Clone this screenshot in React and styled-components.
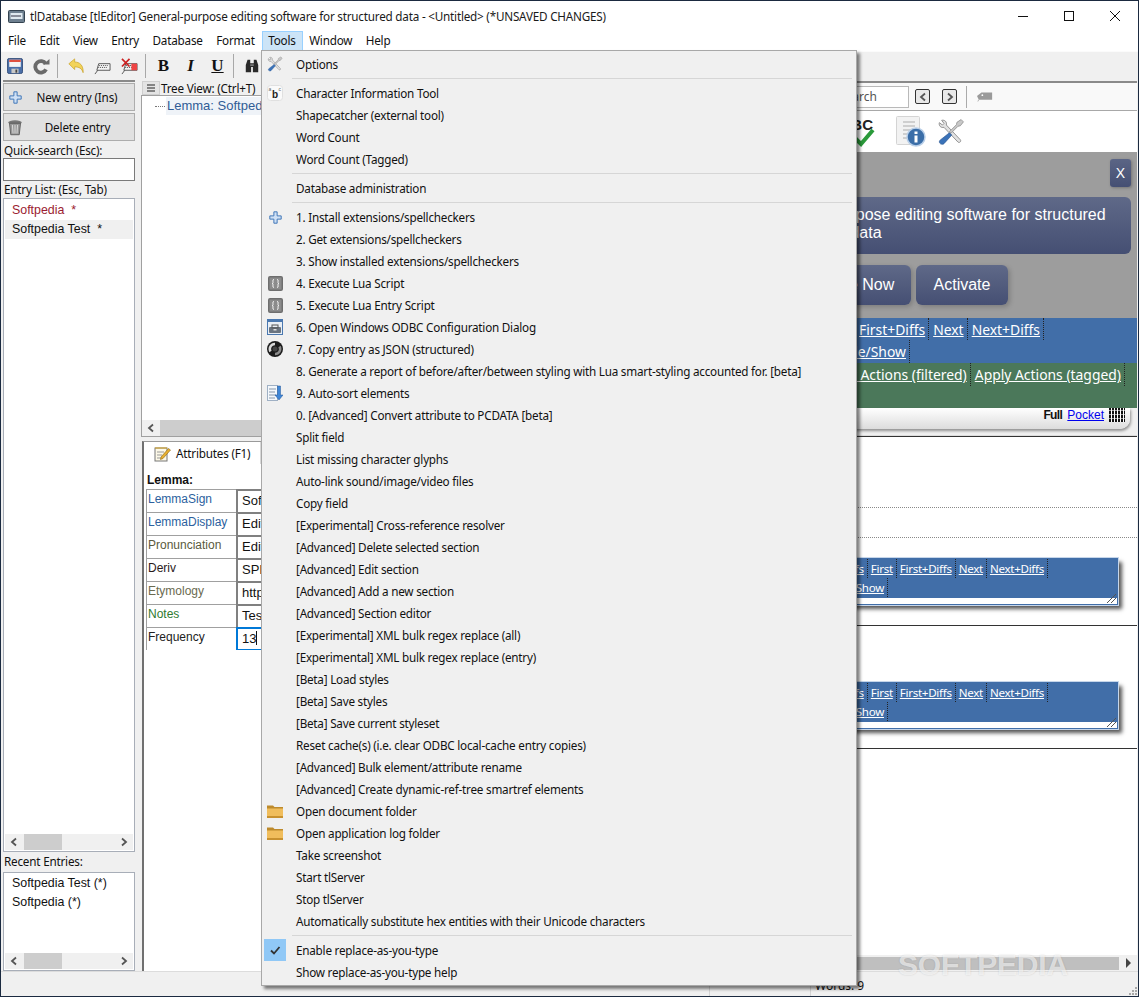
import React from 'react';
import styled, { createGlobalStyle } from 'styled-components';

const UI = '"Noto Sans", "Open Sans", sans-serif';
const ARIAL = '"Liberation Sans", Arial, sans-serif';

const Global = createGlobalStyle`
  html, body { margin: 0; padding: 0; background: #f0f0f0; }
  #root { width: 1139px; height: 997px; overflow: hidden; }
  * { box-sizing: border-box; }
`;

const Win = styled.div`
  position: relative; width: 1139px; height: 997px; display: flex; flex-direction: column;
  border: 1px solid #1b2a40; background: #f0f0f0; font: 12px ${UI}; color: #111; overflow: hidden;
`;
const TitleBar = styled.div`
  height: 30px; background: #fff; display: flex; align-items: center; padding-left: 7px; flex: none;
`;
const TitleText = styled.div`
  margin-left: 5px; flex: 1; white-space: nowrap; font-size: 11.7px; letter-spacing: -.21px; color: #1a1a1a;
`;
const WinCtl = styled.div`
  width: 46px; height: 30px; display: flex; align-items: center; justify-content: center;
`;
const MenuBar = styled.div`
  height: 20px; background: #fff; display: flex; flex: none;
`;
const MenuTop = styled.div`
  padding: 0 7px 0 ${p => (p.$first ? 7 : 6.500)}px; height: 20px; line-height: 19px; font-size: 11.7px; letter-spacing: -.2px; white-space: nowrap;
  background: ${p => (p.$open ? '#cce4f7' : 'transparent')};
  box-shadow: ${p => (p.$open ? 'inset 0 0 0 1px #99d1ff' : 'none')};
`;
const Toolbar = styled.div`
  height: 30px; flex: none; display: flex; align-items: center; background: #f0f0f0; padding-bottom: 1px;
  border-top: 1px solid #fbfbfb;
`;
const ToolBtn = styled.div`
  width: 27px; height: 24px; display: flex; align-items: center; justify-content: center; flex: none;
`;
const TBLetter = styled.span`
  font: bold 17px "Liberation Serif", serif; color: #111;
  font-style: ${p => (p.$i ? 'italic' : 'normal')};
  text-decoration: ${p => (p.$u ? 'underline' : 'none')};
`;
const TBSep = styled.div`
  width: 1px; height: 24px; background: #a8a8a8; margin: 0 4px 0 2px; flex: none;
`;
const Main = styled.div`
  flex: 1; min-height: 0; display: flex; padding: 0 1px 0 2px;
`;
const LeftCol = styled.div`
  width: 132px; flex: none; display: flex; flex-direction: column; padding-top: 1px;
  border-top: 2px solid #8a8a8a; margin-top: -1px;
`;
const SideBtn = styled.div`
  height: 28px; margin-bottom: 2px; background: #e1e1e1; border: 1px solid #adadad; display: flex; align-items: center;
  font: 11.7px ${UI}; letter-spacing: -.15px; padding-left: ${p => p.$pl}px;
`;
const SideLabel = styled.span`
  flex: 1; text-align: center; padding-right: 2px; color: #111;
`;
const Lbl = styled.div`
  height: ${p => p.$h}px; padding: 0 0 ${p => p.$pb || 0}px 1px; font: 11.7px ${UI}; letter-spacing: -.2px; display: flex; align-items: center; color: #111; flex: none;
`;
const SearchBox = styled.div`
  height: 23px; background: #fff; border: 1px solid #7a7a7a; flex: none;
`;
const ListBox = styled.div`
  flex: ${p => (p.$h ? 'none' : 1)}; height: ${p => (p.$h ? p.$h + 'px' : 'auto')}; min-height: 0; background: #fff; border: 1px solid #a8aeb8;
  display: flex; flex-direction: column; padding: ${p => (p.$h ? 1 : 2)}px 1px 1px;
`;
const ListItem = styled.div`
  height: 19px; font: 12.4px/19px ${ARIAL}; padding-left: 7px; white-space: pre; flex: none;
  color: ${p => p.$c || '#111'}; background: ${p => (p.$sel ? '#f0f0f0' : 'transparent')};
`;
const Spacer = styled.div`flex: 1;`;
const HScroll = styled.div`
  height: 16px; flex: none; background: #f0f0f0; display: flex; align-items: center;
`;
const Arrow = styled.div`
  width: ${p => p.$w || 16}px; flex: none; display: flex; align-items: center; justify-content: center;
`;
const Track = styled.div`
  flex: 1; height: 100%; display: flex;
`;
const Thumb = styled.div`
  height: 100%; width: ${p => p.$w}px; margin-left: ${p => p.$l || 0}px; background: #cdcdcd;
`;
const Splitter = styled.div`
  width: 6px; flex: none; background: #f0f0f0;
`;
const CenterCol = styled.div`
  width: 449px; flex: none; display: flex; flex-direction: column;
`;
const TreeHead = styled.div`
  height: 14px; display: flex; align-items: center; font: 11.7px ${UI}; letter-spacing: -.2px; flex: none; padding-left: 1px;
`;
const TreeBtn = styled.div`
  width: 18px; height: 14px; background: #e4e4e4; border: 1px solid #cfcfcf; margin-right: 1px; display: flex; align-items: center; justify-content: center;
`;
const TreeBox = styled.div`
  height: 342px; flex: none; background: #fff; border: 1px solid #a0a0a0; display: flex; flex-direction: column;
`;
const TreeRow = styled.div`
  display: flex; align-items: center; margin-top: 1px; padding-left: 13px; height: 18px; font: 13px ${ARIAL}; flex: none;
`;
const TreeDots = styled.span`
  width: 10px; border-top: 1px dotted #777; margin-right: 1px;
`;
const TreeSel = styled.span`
  background: #eff3f8; color: #2f5c96; padding: 0 1px; height: 18px; line-height: 18px; flex: 1; white-space: nowrap;
`;
const TabPane = styled.div`
  flex: 1; min-height: 0; margin: 4px 0 0 1px; border-left: 2px solid #707070; border-top: 1px solid #9a9a9a; background: #fff;
  display: flex; flex-direction: column;
`;
const TabStrip = styled.div`
  height: 22px; display: flex; padding-left: 1px; flex: none;
`;
const Tab = styled.div`
  height: 22px; display: flex; align-items: center; gap: 5px; padding: 0 5px 0 8px; font: 11.7px ${UI}; letter-spacing: -.2px;
  background: ${p => (p.$on ? '#fff' : '#f0f0f0')}; margin-right: 2px;
  border: 1px solid ${p => (p.$on ? '#fff' : '#d9d9d9')}; white-space: nowrap; width: ${p => p.$w}px;
`;
const LemmaHead = styled.div`
  font: bold 12px ${ARIAL}; padding: 9px 0 2px 2px; height: 25px; margin-left: 1px; color: #111;
`;
const AttrGrid = styled.div`
  display: grid; grid-template-columns: 90px 1fr; grid-auto-rows: 23px; margin-left: 2px;
`;
const AttrName = styled.div`
  border-top: 1px solid #a0a0a0; border-left: 1px solid #a0a0a0; font: 12px/16px ${ARIAL}; color: ${p => p.$c};
  padding: 1px 0 0 1px;
  height: 23px;
`;
const AttrValue = styled.div`
  border-top: 2px solid ${p => (p.$on ? '#0078d7' : '#808080')};
  border-left: 2px solid ${p => (p.$on ? '#0078d7' : '#808080')};
  border-bottom: ${p => (p.$on ? '1px solid #0078d7' : '0')};
  border-right: ${p => (p.$on ? '1px solid #0078d7' : '0')};
  font: 13px/20px ${ARIAL}; padding-left: 4px; color: #111;
`;
const Caret = styled.span`
  display: inline-block; width: 1px; height: 14px; background: #111; vertical-align: -2px;
`;
const RightCol = styled.div`
  flex: 1; min-width: 0; display: flex; flex-direction: column; border-top: 2px solid #8a8a8a;
`;
const RTool = styled.div`
  height: 28px; flex: none; background: #f9f9f9; border-bottom: 1px solid #a8a8a8; display: flex; align-items: center; justify-content: flex-end; padding-right: 144px;
`;
const RInput = styled.div`
  width: 76px; height: 22px; background: #fff; border: 1px solid #b9b9b9; font: 12px/20px ${UI}; padding-left: 5px; color: #555; margin-right: 6px;
`;
const NavBtn = styled.div`
  width: 15px; height: 15px; border: 1px solid #333; border-radius: 2px; background: #e8e8e8; margin-right: ${p => p.$mr}px; display: flex; align-items: center; justify-content: center;
`;
const RSep = styled.div`
  width: 1px; height: 22px; background: #aaa; margin-right: 10px;
`;
const RIcons = styled.div`
  height: 41px; flex: none; background: #fff; display: flex; align-items: center; justify-content: flex-end; padding-right: 172px; gap: 11px;
`;
const AbcWrap = styled.div`
  position: relative; width: 46px; height: 34px; font: bold 15px/20px ${ARIAL}; color: #222; margin-right: 10px; text-align: right; padding-right: 2px;
`;
const AbcCheck = styled.svg`
  position: absolute; right: 0; top: 12px;
`;
const GreyBand = styled.div`
  height: 166px; flex: none; background: #9d9d9d; display: flex; flex-direction: column; align-items: center; padding: 7px 6px 0 11px;
`;
const Close = styled.div`
  width: 21px; height: 28px; align-self: flex-end; border-radius: 3px; background: linear-gradient(#5b6585, #454f73);
  color: #fff; font: 14px/28px ${ARIAL}; text-align: center; box-shadow: 1px 1px 3px rgba(0,0,0,.25);
`;
const Headline = styled.div`
  width: 100%; height: 57px; margin-top: 10px; border-radius: 6px; background: linear-gradient(#5f6988, #454f73);
  color: #fff; font: 16px/18px ${ARIAL}; text-align: center; padding: 9px 24px;
`;
const BtnRow = styled.div`
  display: flex; gap: 5px; margin-top: 11px; justify-content: center;
`;
const BigBtn = styled.div`
  height: 40px; width: ${p => p.$w}px; padding-right: ${p => p.$pr || 0}px; border-radius: 6px; background: linear-gradient(#5f6988, #454f73); color: #fff;
  font: 16px/40px ${ARIAL}; text-align: center; white-space: nowrap; box-shadow: 2px 2px 5px rgba(0,0,0,.2);
`;
const Band = styled.div`
  height: 45px; flex: none; background: ${p => p.$c};
`;
const LinkRow = styled.div`
  height: ${p => p.$h || 23}px; display: flex; align-items: stretch; justify-content: flex-end; padding-right: ${p => p.$pr}px;
`;
const BandLink = styled.a`
  color: #fff; text-decoration: underline; font: 13.9px/23px ${UI}; white-space: nowrap; padding: 0 3px 0 4px;
  border-right: 1px dotted #222;
`;
const SmallLink = styled.a`
  color: #fff; text-decoration: underline; font: 11.6px ${UI}; letter-spacing: -.3px; white-space: nowrap; padding: 0 3px;
  border-right: 1px dotted #222; height: 19px; line-height: 19px;
`;
const Strip = styled.div`
  height: 21px; flex: none; margin-right: 7px; border-bottom-right-radius: 10px; background: linear-gradient(#fff, #dcdcdc);
  box-shadow: 1px 2px 3px rgba(0,0,0,.4); display: flex; align-items: flex-start; justify-content: flex-end; font: 12px ${ARIAL}; padding: 0 5px 0 0; gap: 5px;
`;
const FullTxt = styled.b`font-weight: bold; color: #111; letter-spacing: -.6px;`;
const Pocket = styled.a`color: #0000ee; text-decoration: underline;`;
const Body = styled.div`
  flex: 1; min-height: 0; background: #fff; display: flex; flex-direction: column; border-top: 1px solid #dcdcdc; margin-top: 6px;
`;
const Rule = styled.div`
  flex: none; margin-top: ${p => p.$mt || 0}px; border-top: ${p => (p.$dot ? '1px dotted #8a8a8a' : '1px solid #333')};
`;
const FloatBox = styled.div`
  flex: none; width: 420px; height: 47px; margin: ${p => p.$mt}px 19px 0 auto; background: #fff; border: 1px solid #416ea8; outline: 1px solid #c6d6ea;
  box-shadow: 4px 4px 4px #555; position: relative;
`;
const FloatInner = styled.div`
  height: 39px; background: #416ea8;
`;
const FloatRow = styled.div`
  height: 19px; display: flex; justify-content: flex-end; padding-right: ${p => p.$pr}px;
`;
const Grip = styled.svg`
  position: absolute; right: 1px; bottom: 1px;
`;
const BottomScroll = styled.div`
  height: 16px; flex: none; display: flex; background: #f0f0f0; margin-top: auto;
`;
const BarFill = styled.div`
  flex: 1; background: #bfbfbf; margin: 2px 0 1px;
`;
const Status = styled.div`
  height: 25px; flex: none; background: #f0f0f0; border-top: 1px solid #dcdcdc; display: flex; font: 12px ${UI};
`;
const StatusCell = styled.div`
  width: ${p => p.$w}px; flex: none; border-right: 1px solid #d4d4d4;
`;
const StatusLast = styled.div`
  flex: 1; display: flex; justify-content: space-between; padding: 5px 1px 1px 4px; white-space: nowrap;
`;
const StatusGrip = styled.svg`
  align-self: flex-end;
`;
const Watermark = styled.div`
  position: absolute; left: 897px; top: 948px; font: bold 30px/32px ${ARIAL}; color: rgba(255,255,255,.62); letter-spacing: -.2px;
  text-shadow: 0 0 2px rgba(0,0,0,.14); pointer-events: none;
`;
const Menu = styled.div`
  position: absolute; left: 260px; top: 49px; width: 596px; height: 936px; background: #f0f0f0; border: 1px solid #a8a8a8; padding: 2px 2px 1px;
  box-shadow: 3px 3px 3px rgba(0,0,0,.5); z-index: 5;
`;
const MI = styled.div`
  height: 22px; display: flex; align-items: center; white-space: nowrap; font-size: 11.7px; letter-spacing: -.22px; color: #111;
`;
const MIcon = styled.div`
  width: 22px; height: 22px; margin-right: 10px; display: flex; align-items: center; justify-content: center; flex: none;
  background: ${p => (p.$on ? '#90c8f6' : 'transparent')};
`;
const MSep = styled.div`
  height: 7px; display: flex; align-items: center; padding: 0 2px 0 28px;
  &::after { content: ''; flex: 1; border-top: 1px solid #d6d6d6; }
`;

const Save = () => (
  <svg width="16" height="16" viewBox="0 0 18 18"><rect x=".5" y=".5" width="17" height="17" rx="2" fill="#4a6fa8" stroke="#2f4a78"/><rect x="2.500" y="2" width="13" height="8" fill="#f4f4f4"/><rect x="2.500" y="2" width="13" height="2.500" fill="#e0503f"/><rect x="5" y="12" width="8" height="5" fill="#c9c9c9"/><rect x="9.500" y="13" width="2" height="3.500" fill="#444"/></svg>
);
const Refresh = () => (
  <svg width="17" height="17" viewBox="0 0 18 18"><path d="M13.500 6.200A6 6 0 1 0 13.800 12" fill="none" stroke="#6a6a6a" strokeWidth="4"/><path d="M10.500 7h7V1z" fill="#6a6a6a"/></svg>
);
const Undo = () => (
  <svg width="16" height="16" viewBox="0 0 18 18"><path d="M1 6.500 7.500 1v3.500c5.500 0 10 3.500 9.500 12-1.500-5-4.500-6.500-9.500-6.500V13z" fill="#f2d35a" stroke="#c9a227" strokeWidth=".8"/></svg>
);
const Keyboard = ({ x }) => (
  <svg width="17" height="17" viewBox="0 0 18 18"><path d="M5 6h12v7H3z" fill="#f5f5f5" stroke="#555"/><path d="M5.500 8h10M4.500 10h10" stroke="#444" strokeDasharray="1 1"/><path d="M1 17l3-4" stroke="#555"/>{x && <><rect x="11" y="6" width="6" height="7" fill="#e44"/><path d="M1 1l8 8M9 1 1 9" stroke="#c22" strokeWidth="1.800"/></>}</svg>
);
const Binoc = () => (
  <svg width="16" height="16" viewBox="0 0 18 18"><path d="M2 8 4 2h3v4h4V2h3l2 6v8h-6v-6H8v6H2z" fill="#2a2a2a"/><rect x="7" y="7" width="4" height="2" fill="#777"/></svg>
);
const Plus = ({ s = 13 }) => (
  <svg width={s} height={s} viewBox="0 0 16 16"><path d="M6 1h4v5h5v4h-5v5H6v-5H1V6h5z" fill="#cfe0f5" stroke="#3f76b8" strokeWidth="1.200"/></svg>
);
const Trash = () => (
  <svg width="16" height="17" viewBox="0 0 18 20"><ellipse cx="9" cy="4" rx="8" ry="2.500" fill="#777"/><path d="M2.500 5h13l-1.500 13.500H4z" fill="#999" stroke="#555"/><path d="M6 7l.7 10M9 7v10M12 7l-.7 10" stroke="#e4e4e4"/></svg>
);
const Tools = ({ s = 16 }) => (
  <svg width={s} height={s} viewBox="0 0 18 18"><path d="M3 1.500c2-.5 3.500 1 3 3l9 9.500c.8 1-.5 2.200-1.500 1.500L4.500 6C2.500 6.500 1 5 1.500 3l2 1.500 1-1z" fill="#e2e2e2" stroke="#8c8c8c" strokeWidth=".6"/><path d="M15.500 1l1.500 1.500-2 2.500-1.500.3-4.500 4.500-1-1 4.500-4.500.3-1.500z" fill="#c8c8c8" stroke="#8c8c8c" strokeWidth=".5"/><path d="M8 9.500 9.500 11l-5 5.500c-1 1-3 .2-3-1.200 0-.6.3-1 .8-1.300z" fill="#3a72b8" stroke="#2a5590" strokeWidth=".4"/></svg>
);
const CharB = () => (
  <svg width="16" height="16" viewBox="0 0 16 16"><rect x=".5" y=".5" width="15" height="15" rx="3" fill="#fafafa" stroke="#e0e0e0"/><text x="5" y="12.500" fontFamily="Liberation Sans" fontWeight="bold" fontSize="10" fill="#222">b</text><text x="1.500" y="6" fontFamily="Liberation Sans" fontSize="5" fill="#666">a</text><text x="11.500" y="6" fontFamily="Liberation Sans" fontSize="5" fill="#666">c</text></svg>
);
const Lua = () => (
  <svg width="15" height="15" viewBox="0 0 15 15"><rect width="15" height="15" rx="2" fill="#6e6e6e"/><rect x="1.500" y="1.500" width="12" height="12" fill="#8b8b8b"/><path d="M6 3.500c-1.500 0-1 1.500-1 3s-1 1-1 1 1 0 1 1-.5 3 1 3M9 3.500c1.500 0 1 1.500 1 3s1 1 1 1-1 0-1 1 .5 3-1 3" fill="none" stroke="#fff"/></svg>
);
const Odbc = () => (
  <svg width="16" height="16" viewBox="0 0 16 16"><rect width="16" height="16" fill="#4a78b0"/><rect x="1" y="3" width="14" height="12" fill="#e8eef5"/><rect x="2" y="8" width="12" height="6" rx="1" fill="#6a7480"/><rect x="5" y="6" width="6" height="3" fill="none" stroke="#555"/><rect x="6.500" y="10" width="3" height="1.500" fill="#ddd"/></svg>
);
const Swirl = () => (
  <svg width="16" height="16" viewBox="0 0 16 16"><circle cx="8" cy="8" r="8" fill="#1c1c1c"/><path d="M8 3a5 5 0 0 0-4.500 7.500" fill="none" stroke="#d8d8d8" strokeWidth="2.500"/><path d="M8 13a5 5 0 0 0 4.500-7.500" fill="none" stroke="#8c8c8c" strokeWidth="2.500"/><circle cx="8" cy="8" r="2.500" fill="#444"/></svg>
);
const Sort = () => (
  <svg width="16" height="16" viewBox="0 0 16 16"><rect x=".5" y=".5" width="10" height="15" fill="#f4f8fc" stroke="#9fb0c4"/><path d="M2 4h7M2 7h6M2 10h7M2 13h6" stroke="#8596aa"/><path d="M10.500 1h3v9H16l-4 5-4-5h2.500z" fill="#3f86d6" stroke="#23579a" strokeWidth=".5"/></svg>
);
const Folder = () => (
  <svg width="16" height="14" viewBox="0 0 16 14"><path d="M0 1.500h6l1.500 1.500H16v11H0z" fill="#bd8a2c"/><rect x="0" y="4.500" width="16" height="9.500" fill="#f0bd5c"/><rect x="0" y="12" width="16" height="2" fill="#c8912f"/></svg>
);
const Check = () => (
  <svg width="12" height="12" viewBox="0 0 12 12"><path d="M2 6.500 5 9.500 10.500 3" fill="none" stroke="#333" strokeWidth="1.800"/></svg>
);
const Notes = () => (
  <svg width="17" height="17" viewBox="0 0 17 17"><rect x="1" y="3" width="12" height="13" fill="#fdf9e8" stroke="#777"/><path d="M1.500 3h11" stroke="#d9a520" strokeWidth="2" strokeDasharray="1 1"/><path d="M3 7h7M3 10h5M3 13h5" stroke="#999"/><path d="M7 12 14.500 3.500l2 1.500L9 13.500l-2.500 1z" fill="#e8b030" stroke="#8a6414" strokeWidth=".6"/></svg>
);
const Lines = () => (
  <svg width="10" height="8" viewBox="0 0 10 8"><path d="M1 1h8M1 4h8M1 7h8" stroke="#222"/></svg>
);
const ChevL = () => <svg width="10" height="10" viewBox="0 0 10 10"><path d="M7 1.500 3 5l4 3.500" fill="none" stroke="#555" strokeWidth="1.800"/></svg>;
const ChevR = () => <svg width="10" height="10" viewBox="0 0 10 10"><path d="M3 1.500 7 5 3 8.500" fill="none" stroke="#555" strokeWidth="1.800"/></svg>;
const Tag = () => (
  <svg width="16" height="12" viewBox="0 0 18 12"><path d="M5 1h12v8H2L0 5z" fill="#9a9a9a"/><circle cx="6" cy="4" r="1" fill="#fff"/><path d="M2 9 1 11" stroke="#aaa"/></svg>
);
const InfoDoc = () => (
  <svg width="30" height="32" viewBox="0 0 30 32"><rect x=".5" y=".5" width="23" height="28" rx="1" fill="#f2f2f2" stroke="#d4d4d4"/><path d="M7 6h12M7 10h12M7 14h9M7 18h7M7 22h7" stroke="#cfcfcf" strokeWidth="2"/><circle cx="20" cy="21" r="9" fill="#3b6ea8" stroke="#b9cfe8" strokeWidth="1.500"/><rect x="18.500" y="19.500" width="3" height="7" fill="#fff"/><rect x="18.500" y="15.500" width="3" height="2.500" fill="#fff"/></svg>
);
const Pattern = () => (
  <svg width="16" height="14" viewBox="0 0 16 14"><rect width="16" height="14" fill="#111"/><path d="M2.500 0v14M5.500 0v14M8.500 0v14M11.500 0v14M14.500 0v14" stroke="#fff"/><path d="M0 2.500h16M0 6.500h16M0 10.500h16" stroke="#fff" strokeWidth=".6"/></svg>
);

const menuGroups = [
  [['Options', <Tools key="t" />]],
  [['Character Information Tool', <CharB key="c" />], ['Shapecatcher (external tool)'], ['Word Count'], ['Word Count (Tagged)']],
  [['Database administration']],
  [
    ['1. Install extensions/spellcheckers', <Plus key="p" s={13} />], ['2. Get extensions/spellcheckers'], ['3. Show installed extensions/spellcheckers'],
    ['4. Execute Lua Script', <Lua key="l" />], ['5. Execute Lua Entry Script', <Lua key="l2" />], ['6. Open Windows ODBC Configuration Dialog', <Odbc key="o" />],
    ['7. Copy entry as JSON (structured)', <Swirl key="s" />], ['8. Generate a report of before/after/between styling with Lua smart-styling accounted for. [beta]'],
    ['9. Auto-sort elements', <Sort key="so" />], ['0. [Advanced] Convert attribute to PCDATA [beta]'], ['Split field'], ['List missing character glyphs'],
    ['Auto-link sound/image/video files'], ['Copy field'], ['[Experimental] Cross-reference resolver'], ['[Advanced] Delete selected section'], ['[Advanced] Edit section'],
    ['[Advanced] Add a new section'], ['[Advanced] Section editor'], ['[Experimental] XML bulk regex replace (all)'], ['[Experimental] XML bulk regex replace (entry)'],
    ['[Beta] Load styles'], ['[Beta] Save styles'], ['[Beta] Save current styleset'], ['Reset cache(s) (i.e. clear ODBC local-cache entry copies)'],
    ['[Advanced] Bulk element/attribute rename'], ['[Advanced] Create dynamic-ref-tree smartref elements'], ['Open document folder', <Folder key="f" />],
    ['Open application log folder', <Folder key="f2" />], ['Take screenshot'], ['Start tlServer'], ['Stop tlServer'], ['Automatically substitute hex entities with their Unicode characters'],
  ],
  [['Enable replace-as-you-type', <Check key="ck" />, true], ['Show replace-as-you-type help']],
];

const attrs = [
  ['LemmaSign', '#2c5f9e', 'Softpedia'], ['LemmaDisplay', '#2c5f9e', 'Editing'], ['Pronunciation', '#5a5a40', 'Editing'], ['Deriv', '#2a1a1a', 'SPI'],
  ['Etymology', '#6a6a50', 'http'], ['Notes', '#2f7a2f', 'Test'],
];

const SmallScroll = ({ thumb, left }) => (
  <HScroll>
    <Arrow $w={18}><ChevL /></Arrow>
    <Track><Thumb $w={thumb} $l={left} /></Track>
    <Arrow $w={18}><ChevR /></Arrow>
  </HScroll>
);

const FloatLinks = () => (
  <FloatInner>
    <FloatRow $pr={69}>
      {['Prev+Diffs', 'First', 'First+Diffs', 'Next', 'Next+Diffs'].map(t => <SmallLink key={t} href="#">{t}</SmallLink>)}
    </FloatRow>
    <FloatRow $pr={229}>
      <SmallLink href="#">Hide/Show</SmallLink>
    </FloatRow>
  </FloatInner>
);

const FloatGrip = () => (
  <Grip width="9" height="9" viewBox="0 0 9 9"><path d="M0 9 9 0M4 9l5-5" stroke="#555"/></Grip>
);

export default function App() {
  return (
    <>
      <Global />
      <Win>
        <TitleBar>
          <svg width="17" height="13" viewBox="0 0 17 13"><rect x=".5" y=".5" width="16" height="12" rx="1" fill="#6d7f8f" stroke="#33424f"/><rect x="2.500" y="3" width="12" height="6" fill="#dfe9ef"/><path d="M4 5v2M6 5v2M8 5v2M10 5v2M12 5v2" stroke="#334"/></svg>
          <TitleText>tlDatabase [tlEditor] General-purpose editing software for structured data - &lt;Untitled&gt; (*UNSAVED CHANGES)</TitleText>
          <WinCtl><svg width="10" height="10"><path d="M0 5.500h10" stroke="#111"/></svg></WinCtl>
          <WinCtl><svg width="10" height="10"><rect x=".5" y=".5" width="9" height="9" fill="none" stroke="#111"/></svg></WinCtl>
          <WinCtl><svg width="10" height="10"><path d="M0 0l10 10M10 0 0 10" stroke="#111"/></svg></WinCtl>
        </TitleBar>
        <MenuBar>
          {['File', 'Edit', 'View', 'Entry', 'Database', 'Format'].map((m, i) => <MenuTop key={m} $first={i === 0}>{m}</MenuTop>)}
          <MenuTop $open>Tools</MenuTop>
          <MenuTop>Window</MenuTop>
          <MenuTop>Help</MenuTop>
        </MenuBar>
        <Toolbar>
          <ToolBtn><Save /></ToolBtn>
          <ToolBtn><Refresh /></ToolBtn>
          <TBSep />
          <ToolBtn><Undo /></ToolBtn>
          <ToolBtn><Keyboard /></ToolBtn>
          <ToolBtn><Keyboard x /></ToolBtn>
          <TBSep />
          <ToolBtn><TBLetter>B</TBLetter></ToolBtn>
          <ToolBtn><TBLetter $i>I</TBLetter></ToolBtn>
          <ToolBtn><TBLetter $u>U</TBLetter></ToolBtn>
          <TBSep />
          <ToolBtn><Binoc /></ToolBtn>
        </Toolbar>
        <Main>
          <LeftCol>
            <SideBtn $pl={5}><Plus /><SideLabel>New entry (Ins)</SideLabel></SideBtn>
            <SideBtn $pl={3}><Trash /><SideLabel>Delete entry</SideLabel></SideBtn>
            <Lbl $h={15} $pb={2}>Quick-search (Esc):</Lbl>
            <SearchBox />
            <Lbl $h={17} $pb={2}>Entry List: (Esc, Tab)</Lbl>
            <ListBox>
              <ListItem $c="#9b1c31">{'Softpedia  *'}</ListItem>
              <ListItem $sel>{'Softpedia Test  *'}</ListItem>
              <Spacer />
              <SmallScroll thumb={38} left={1} />
            </ListBox>
            <Lbl $h={20} $pb={3}>Recent Entries:</Lbl>
            <ListBox $h={99}>
              <ListItem>Softpedia Test (*)</ListItem>
              <ListItem>Softpedia (*)</ListItem>
              <Spacer />
              <SmallScroll thumb={38} left={1} />
            </ListBox>
          </LeftCol>
          <Splitter />
          <CenterCol>
            <TreeHead><TreeBtn><Lines /></TreeBtn>Tree View: (Ctrl+T)</TreeHead>
            <TreeBox>
              <TreeRow><TreeDots /><TreeSel>Lemma: Softpedia</TreeSel></TreeRow>
              <Spacer />
              <SmallScroll thumb={180} left={0} />
            </TreeBox>
            <TabPane>
              <TabStrip>
                <Tab $on $w={113}><Notes />Attributes (F1)</Tab>
                <Tab $w={60}><Lines /></Tab>
              </TabStrip>
              <LemmaHead>Lemma:</LemmaHead>
              <AttrGrid>
                {attrs.map(([n, c, v]) => (
                  <React.Fragment key={n}>
                    <AttrName $c={c}>{n}</AttrName>
                    <AttrValue>{v}</AttrValue>
                  </React.Fragment>
                ))}
                <AttrName $c="#222">Frequency</AttrName>
                <AttrValue $on>13<Caret /></AttrValue>
              </AttrGrid>
            </TabPane>
          </CenterCol>
          <RightCol>
            <RTool>
              <RInput>Search</RInput>
              <NavBtn $mr={12}><ChevL /></NavBtn>
              <NavBtn $mr={9}><ChevR /></NavBtn>
              <RSep />
              <Tag />
            </RTool>
            <RIcons>
              <AbcWrap>ABC<AbcCheck width="22" height="20" viewBox="0 0 22 20"><path d="M2 11l6 6L20 3" fill="none" stroke="#2a9a3a" strokeWidth="4"/></AbcCheck></AbcWrap>
              <InfoDoc />
              <Tools s={28} />
            </RIcons>
            <GreyBand>
              <Close>X</Close>
              <Headline>tlDatabase [tlEditor] General-purpose editing software for structured data</Headline>
              <BtnRow>
                <BigBtn $w={187} $pr={10}>Purchase License Now</BigBtn>
                <BigBtn $w={92}>Activate</BigBtn>
              </BtnRow>
            </GreyBand>
            <Band $c="#416ea8">
              <LinkRow $pr={93} $h={22}>
                {['First', 'First+Diffs', 'Next', 'Next+Diffs'].map(t => <BandLink key={t} href="#">{t}</BandLink>)}
              </LinkRow>
              <LinkRow $pr={227}><BandLink href="#">Hide/Show</BandLink></LinkRow>
            </Band>
            <Band $c="#4b785a">
              <LinkRow $pr={12}>
                <BandLink href="#">Filter Actions (filtered)</BandLink>
                <BandLink href="#">Apply Actions (tagged)</BandLink>
              </LinkRow>
            </Band>
            <Strip><FullTxt>Full</FullTxt><Pocket href="#">Pocket</Pocket><Pattern /></Strip>
            <Body>
              <Rule />
              <Rule $dot $mt={70} />
              <Rule $dot $mt={29} />
              <FloatBox $mt={20}><FloatLinks /><FloatGrip /></FloatBox>
              <Rule $mt={20} />
              <FloatBox $mt={56}><FloatLinks /><FloatGrip /></FloatBox>
              <Rule $mt={19} />
              <BottomScroll>
                <BarFill />
                <Arrow $w={18}><svg width="8" height="10"><path d="M2 0l5 5-5 5z" fill="#444"/></svg></Arrow>
              </BottomScroll>
            </Body>
          </RightCol>
        </Main>
        <Status>
          <StatusCell $w={709} />
          <StatusCell $w={101} />
          <StatusLast>Words: 9
            <StatusGrip width="9" height="9" viewBox="0 0 9 9"><path d="M7 1h2v2H7zM4 4h2v2H4zM7 4h2v2H7zM1 7h2v2H1zM4 7h2v2H4zM7 7h2v2H7z" fill="#a8a8a8"/></StatusGrip>
          </StatusLast>
        </Status>
        <Watermark>SOFTPEDIA</Watermark>
        <Menu>
          {menuGroups.map((g, i) => (
            <React.Fragment key={i}>
              {i > 0 && <MSep />}
              {g.map(([t, ic, on]) => (
                <MI key={t}><MIcon $on={on}>{ic}</MIcon>{t}</MI>
              ))}
            </React.Fragment>
          ))}
        </Menu>
      </Win>
    </>
  );
}
